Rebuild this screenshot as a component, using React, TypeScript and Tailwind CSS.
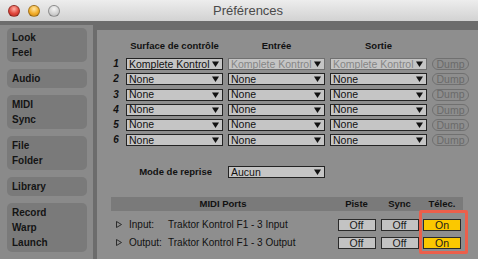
import React from 'react';

const surfaces = [
  { n: '1', a: 'Komplete Kontrol', b: 'Komplete Kontrol DAW - 1', c: 'Komplete Kontrol DAW - 1', locked: true },
  { n: '2', a: 'None', b: 'None', c: 'None' },
  { n: '3', a: 'None', b: 'None', c: 'None' },
  { n: '4', a: 'None', b: 'None', c: 'None' },
  { n: '5', a: 'None', b: 'None', c: 'None' },
  { n: '6', a: 'None', b: 'None', c: 'None' },
];

const tabs = [['Look', 'Feel'], ['Audio'], ['MIDI', 'Sync'], ['File', 'Folder'], ['Library'], ['Record', 'Warp', 'Launch']];

const ports = [
  { label: 'Input:', name: 'Traktor Kontrol F1 - 3 Input' },
  { label: 'Output:', name: 'Traktor Kontrol F1 - 3 Output' },
];

function Arrow() {
  return (
    <svg width="7" height="6" viewBox="0 0 7 6" className="shrink-0">
      <path d="M0 0.5h7L3.5 6z" fill="#111" />
    </svg>
  );
}

function Select({ value, disabled }: { value: string; disabled?: boolean }) {
  return (
    <div
      className={`flex h-[12px] w-[97px] items-center border bg-[#c5c5c5] pr-[3px] ${
        disabled ? 'border-[#707070] text-[#858585]' : 'border-[#232323] text-[#111]'
      }`}
    >
      <span className="min-w-0 flex-1 overflow-hidden whitespace-nowrap pl-[2px] text-[10.5px] leading-[11px] text-clip">
        {value}
      </span>
      <Arrow />
    </div>
  );
}

function Toggle({ on }: { on?: boolean }) {
  return (
    <div
      className={`flex h-[12px] w-[38px] items-center justify-center border border-[#2a2a2a] text-[10.5px] leading-none text-[#1a1a1a] ${
        on ? 'bg-[#fbc800]' : 'bg-[#c3c3c3]'
      }`}
    >
      {on ? 'On' : 'Off'}
    </div>
  );
}

function Light({ color }: { color: string }) {
  return <div className={`h-[12px] w-[12px] rounded-full border border-black/30 ${color}`} />;
}

export default function App() {
  return (
    <div className="h-[259px] w-[478px] overflow-hidden font-['Liberation_Sans',Arial,sans-serif] text-[#111]">
      {/* title bar */}
      <div className="flex h-[21px] items-center bg-gradient-to-b from-[#ededed] to-[#d2d2d2] pl-[8px]">
        <div className="flex gap-[8px]">
          <Light color="bg-[radial-gradient(circle_at_50%_30%,#ffb2a8,#e0463c_55%,#b42a22)]" />
          <Light color="bg-[radial-gradient(circle_at_50%_30%,#ffe7a6,#f2ad2a_55%,#c98512)]" />
          <Light color="bg-[radial-gradient(circle_at_50%_30%,#f5f5f5,#cfcfcf_60%,#b0b0b0)]" />
        </div>
        <span className="ml-[153px] text-[13px] text-[#4a4a4a]">Préférences</span>
      </div>

      <div className="flex h-[238px] bg-[#6c6c6c]">
        {/* sidebar */}
        <div className="mt-[4px] flex w-[93px] flex-col gap-[7px] bg-[#8a8a8a] pl-[7px] pr-[6px] pt-[3px]">
          {tabs.map((t) => (
            <div key={t[0]} className="rounded-[5px] bg-[#7a7a7a] py-[2px] pl-[5px]">
              {t.map((l) => (
                <div key={l} className="text-[10px] font-bold leading-[15px] text-[#141414]">
                  {l}
                </div>
              ))}
            </div>
          ))}
        </div>

        {/* main panel */}
        <div className="ml-[4px] mt-[9px] flex-1 bg-[#8e8e8e] pl-[14px] pt-[10px]">
          <div className="grid grid-cols-[10px_97px_97px_97px_37px] gap-x-[5px] gap-y-[3.2px]">
            <div />
            <div className="mb-[3px] h-[12px] text-center text-[9.5px] font-bold leading-[12px]">Surface de contrôle</div>
            <div className="h-[12px] text-center text-[9.5px] font-bold leading-[12px]">Entrée</div>
            <div className="h-[12px] text-center text-[9.5px] font-bold leading-[12px]">Sortie</div>
            <div />
            {surfaces.map((s) => (
              <React.Fragment key={s.n}>
                <div className="h-[12px] text-center text-[10px] font-bold italic leading-[12px]">{s.n}</div>
                <Select value={s.a} />
                <Select value={s.b} disabled={s.locked} />
                <Select value={s.c} disabled={s.locked} />
                <div className="flex h-[12px] items-center justify-center rounded-full border border-[#707070] text-[10.5px] leading-none text-[#6a6a6a]">
                  Dump
                </div>
              </React.Fragment>
            ))}
          </div>

          <div className="mt-[19px] flex items-center">
            <span className="w-[101px] text-right text-[9.5px] font-bold">Mode de reprise</span>
            <div className="ml-[16px]">
              <Select value="Aucun" />
            </div>
          </div>

          {/* MIDI ports */}
          <div className="relative mt-[18px] w-[352px]">
            <div className="grid h-[14px] grid-cols-[224px_43px_43px_42px] items-center bg-[#7a7a7a] text-center text-[9.5px] font-bold">
              <span>MIDI Ports</span>
              <span>Piste</span>
              <span>Sync</span>
              <span>Télec.</span>
            </div>
            <div className="mt-[6px] flex flex-col gap-[6px]">
              {ports.map((p) => (
                <div key={p.label} className="grid h-[12px] grid-cols-[224px_43px_43px_42px] items-center text-[10px]">
                  <div className="flex items-center">
                    <svg width="6" height="7" viewBox="0 0 6 7" className="ml-[5px]">
                      <path d="M0.5 0.5L5.5 3.5L0.5 6.5z" fill="none" stroke="#222" strokeWidth="0.9" />
                    </svg>
                    <span className="ml-[7px] w-[39px]">{p.label}</span>
                    <span className="whitespace-nowrap">{p.name}</span>
                  </div>
                  <div className="flex justify-center">
                    <Toggle />
                  </div>
                  <div className="flex justify-center">
                    <Toggle />
                  </div>
                  <div className="flex justify-center">
                    <Toggle on />
                  </div>
                </div>
              ))}
            </div>
            <div className="absolute left-[308px] top-[13px] h-[44px] w-[49px] rounded-[2px] border-[3px] border-[#ec5f4b]" />
          </div>
        </div>
      </div>
    </div>
  );
}
